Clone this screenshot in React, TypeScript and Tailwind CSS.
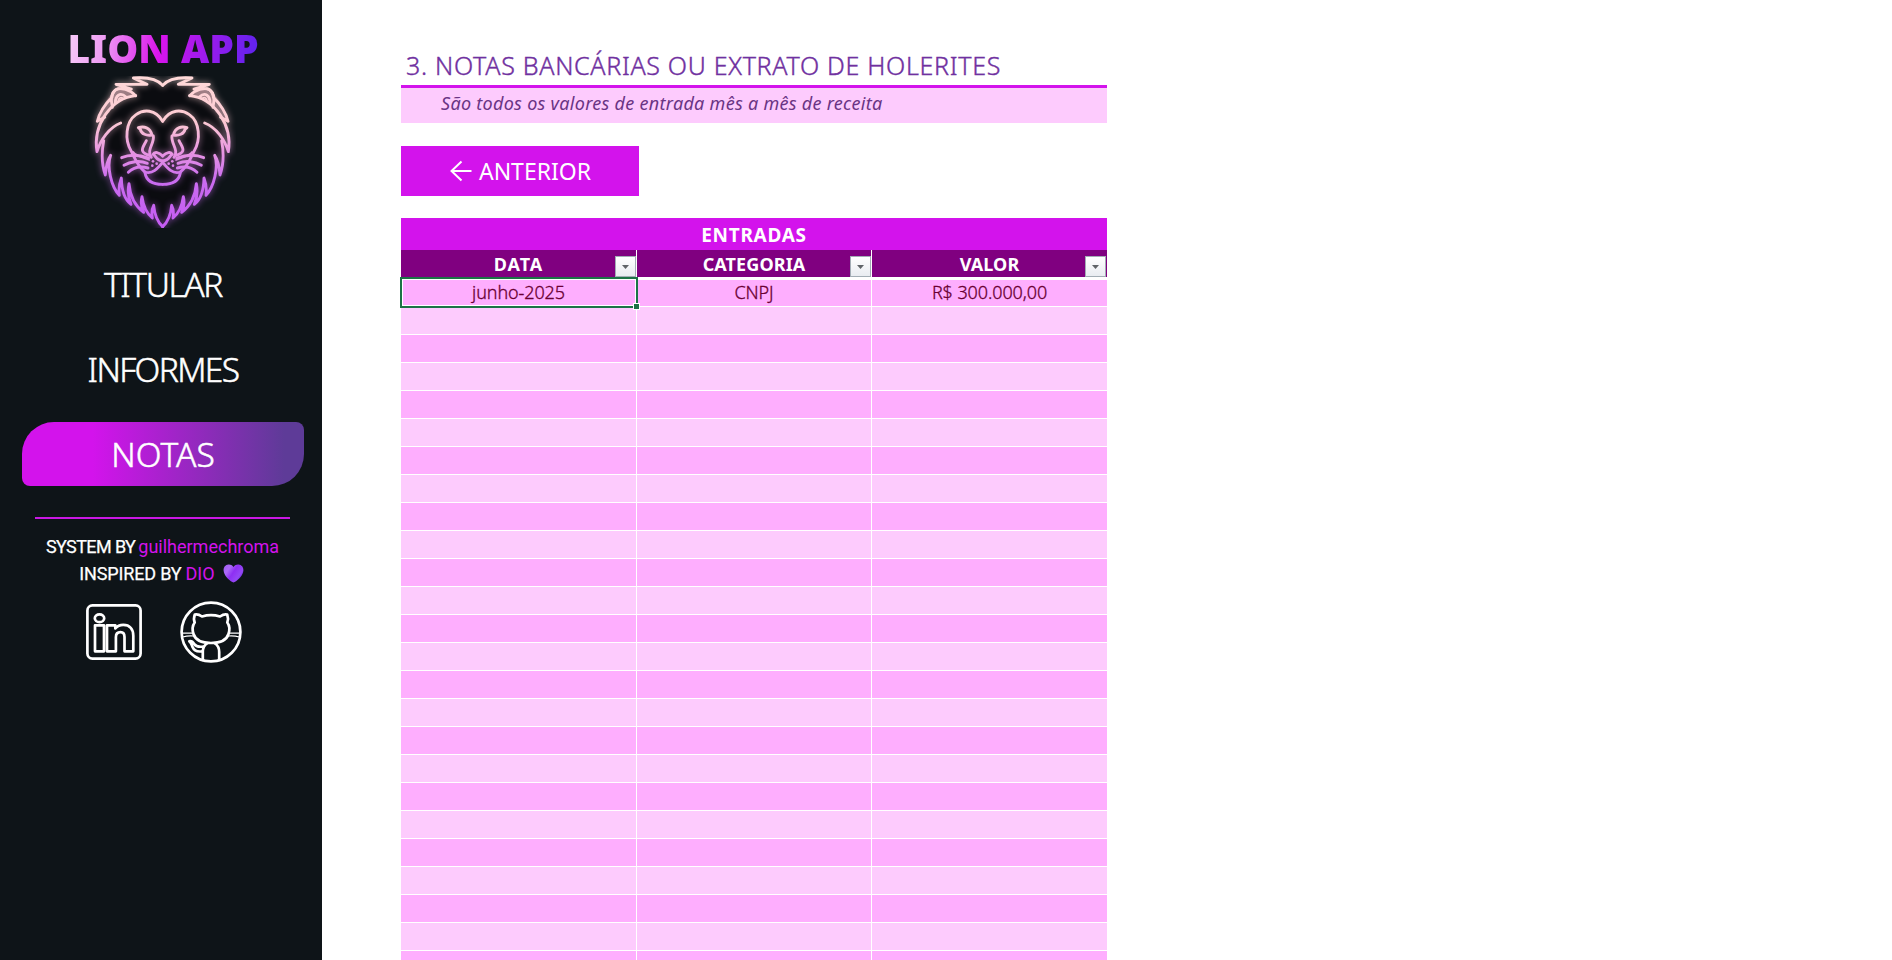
import type { ReactNode } from "react";

const navItems = [
  { label: "TITULAR", active: false, spacing: "tracking-[-1.4px]" },
  { label: "INFORMES", active: false, spacing: "tracking-[-1.6px]" },
  { label: "NOTAS", active: true, spacing: "tracking-[0.1px]" },
];

const columns = [
  { label: "DATA", spacing: "tracking-[1px]", filter: "mr-0" },
  { label: "CATEGORIA", spacing: "tracking-[0.1px]", filter: "mr-0" },
  { label: "VALOR", spacing: "tracking-[0.1px]", filter: "mr-px" },
];

const entries: string[][] = [["junho-2025", "CNPJ", "R$ 300.000,00"]];
const ROW_COUNT = 25;

function LionHalf() {
  return (
    <g>
      <path
        d="M184 262C178 240 184 208 200 206C222 204 240 216 257 227C232 232 205 246 184 262Z"
        fill="#f4b8c4"
        fillOpacity="0.35"
        stroke="none"
      />
      <path d="M184 222C166 242 148 276 142 304L180 276Z" fill="#f4b8c4" fillOpacity="0.28" stroke="none" />
      <path d="M338 196C325 181 300 170 250 174L291 193L198 193L244 207L208 206C194 205 186 222 186 232C166 252 148 280 142 304L164 292" />
      <path d="M257 227C236 206 212 202 198 209C184 218 182 240 187 262" />
      <path d="M257 227C224 230 190 250 166 284C142 320 135 360 141 395C152 358 178 322 212 309" />
      <path d="M196 248C196 228 210 214 228 231" />
      <path d="M205 244C205 234 213 230 219 236" strokeWidth="5" />
      <path d="M161 362C154 400 157 440 166 465C168 440 172 420 182 406C169 440 184 500 208 526C205 505 208 490 214 474C215 510 225 540 243 553C233 530 233 510 237 491C240 530 258 560 281 577C273 560 272 545 276 530C280 560 290 580 307 594C304 575 306 565 311 556C314 590 325 608 338 620" />
      <path d="M338 304C316 266 280 268 258 284C226 306 224 360 243 392C256 418 262 438 285 456C308 464 324 444 338 427" />
      <path d="M250 396C258 408 278 412 298 420" strokeWidth="5" />
      <path d="M285 458C289 483 308 493 338 493" />
      <path d="M310 348C314 370 288 390 304 412M289 362C280 382 262 396 302 408" />
      <path d="M338 408C326 396 314 394 309 403C318 406 316 421 338 423" />
      <path d="M265 323C282 318 300 322 306 345C290 348 274 342 271 328Z" />
      <path d="M215 413C240 402 270 405 296 414M222 436C240 425 268 420 292 430M235 457C250 442 272 438 294 444" />
      <g stroke="none" fill="url(#lionStroke)">
        <circle cx="309" cy="424" r="4" />
        <circle cx="307" cy="437" r="4" />
        <circle cx="320" cy="431" r="4" />
      </g>
    </g>
  );
}

function LionLogo() {
  const shape = (
    <>
      <LionHalf />
      <g transform="translate(676 0) scale(-1 1)">
        <LionHalf />
      </g>
    </>
  );
  return (
    <svg width="147" height="152" viewBox="117 168 441 456" className="block shrink-0 overflow-hidden">
      <defs>
        <linearGradient id="lionStroke" gradientUnits="userSpaceOnUse" x1="0" y1="168" x2="0" y2="624">
          <stop offset="0" stopColor="#ffd9d8" />
          <stop offset="0.3" stopColor="#fdcad3" />
          <stop offset="0.5" stopColor="#e895e2" />
          <stop offset="0.68" stopColor="#cb6cf0" />
          <stop offset="1" stopColor="#c45cf3" />
        </linearGradient>
        <filter id="lionGlow" filterUnits="userSpaceOnUse" x="90" y="130" width="500" height="520">
          <feGaussianBlur stdDeviation="10" />
        </filter>
      </defs>
      <path d="M338 196L250 180L190 230L142 390L190 500L338 616L486 500L534 390L486 230L426 180Z" fill="#0b0c10" />
      <g fill="none" strokeLinecap="round" strokeLinejoin="round" stroke="url(#lionStroke)">
        <g filter="url(#lionGlow)" opacity="0.5" strokeWidth="12">{shape}</g>
        <g strokeWidth="8.6">{shape}</g>
      </g>
    </svg>
  );
}

function HeartIcon() {
  return (
    <svg width="21" height="19" viewBox="0 0 21 19" className="ml-[4px] block">
      <defs>
        <linearGradient id="heart" x1="0" y1="0" x2="1" y2="0.6">
          <stop offset="0" stopColor="#a05cf5" />
          <stop offset="0.3" stopColor="#ac6af8" />
          <stop offset="0.55" stopColor="#8e2ff3" />
          <stop offset="0.85" stopColor="#9448f5" />
          <stop offset="1" stopColor="#6a2be0" />
        </linearGradient>
      </defs>
      <path
        d="M10.5 3C12 .8 14 .3 15.6 .5C18.6 .8 20.6 3.2 20.4 6.4C20.1 11.3 15.5 15.6 11.6 18.1Q10.5 18.7 9.4 18.1C5.5 15.6 .9 11.3 .6 6.4C.4 3.2 2.4 .8 5.4 .5C7 .3 9 .8 10.5 3Z"
        fill="url(#heart)"
      />
    </svg>
  );
}

function LinkedInIcon() {
  return (
    <svg width="56" height="56" viewBox="0 0 56 56" fill="none" stroke="#fff" strokeWidth="2.7" strokeLinejoin="round">
      <rect x="1.4" y="1.4" width="53.2" height="53.2" rx="5" />
      <ellipse cx="13.5" cy="14.2" rx="4.7" ry="3.9" />
      <path d="M9 21.3h9v26H9zM21 21.3h8.3v3.2c2-2.5 4.7-3.7 8-3.7c6.5 0 10 4.3 10 11v15.5h-8.8V33c0-3-1.3-4.8-4-4.8c-2.9 0-4.6 1.9-4.6 5v14.1H21z" />
    </svg>
  );
}

function GitHubIcon() {
  return (
    <svg width="62" height="62" viewBox="0 0 62 62" fill="none" stroke="#fff" strokeWidth="2.7" strokeLinejoin="round" strokeLinecap="round">
      <circle cx="31" cy="31" r="29.4" />
      <path d="M22 15.5C28 13.7 34 13.7 40 15.5C42.5 13.7 45 13 47.2 13.5C48.2 16.3 48.3 19 47.3 21.5C49.5 24.5 49.8 29 48.5 33C46.5 39.5 40 42 31 42S15.5 39.5 13.5 33C12.2 29 12.5 24.5 14.7 21.5C13.7 19 13.8 16.3 14.8 13.5C17 13 19.5 13.7 22 15.5Z" />
      <path d="M27 42.5C24 44.5 22.8 47.5 22.8 51V59M35 42.5C38 44.5 39.2 47.5 39.2 51V59" />
      <path d="M23.5 45.5C18 46.3 15.8 45.5 14.2 43C12.8 40.8 11.4 39.8 9.3 40.3C11.3 41.5 11.5 43.5 12.5 46C14 49.7 17.5 51 22.2 50.3" />
      <path d="M2 32.2H13M2.5 36Q8 34.5 13.5 35M60 32.2H49M59.5 36Q54 34.5 48.5 35" strokeWidth="1.2" />
    </svg>
  );
}

function FilterButton({ className }: { className: string }) {
  return (
    <span
      className={`absolute right-0 bottom-0 flex size-[21px] items-center justify-center border border-[#a3adb5] bg-linear-to-b from-white to-[#e9ecf1] ${className}`}
    >
      <svg width="7" height="4" viewBox="0 0 7 4" className="block">
        <path d="M0 0h7L3.5 4z" fill="#606468" />
      </svg>
    </span>
  );
}

function SelectionFrame() {
  return (
    <span className="pointer-events-none absolute -top-[3px] -right-[2px] -bottom-[2px] -left-px z-10 border-2 border-[#1c7346]">
      <span className="absolute inset-0 border border-white" />
      <span className="absolute -right-[4px] -bottom-[4px] size-[7px] border border-white bg-[#1c7346]" />
    </span>
  );
}

function Row({ children }: { children: ReactNode }) {
  return <div className="grid shrink-0 grid-cols-[235px_234px_235px] gap-px">{children}</div>;
}

export default function App() {
  return (
    <div className="flex h-[960px] w-[1892px] overflow-hidden bg-white font-['Noto_Sans',sans-serif]">
      <aside className="flex w-[322px] shrink-0 flex-col items-center bg-[#0e1418] pt-6 pl-[3px]">
        <h1 className="ml-px bg-[linear-gradient(100deg,#f7d0f7_0%,#ee9cf3_20%,#d814ec_48%,#b318ec_62%,#5a24ee_100%)] bg-clip-text text-[39px] leading-[48px] font-black text-transparent">
          LION APP
        </h1>
        <div className="mt-1 flex">
          <LionLogo />
        </div>
        <nav className="mt-6 ml-px flex w-[282px] flex-col gap-[21px]">
          {navItems.map((item) => (
            <a
              key={item.label}
              className={`block h-16 text-center text-[33.5px] leading-[64px] font-light text-white [-webkit-text-stroke:0.5px_white] ${item.spacing} ${
                item.active
                  ? "rounded-tl-[32px] rounded-tr-lg rounded-br-[32px] rounded-bl-lg bg-[linear-gradient(90deg,#d313ec_0%,#d313ec_25%,#5e3b98_93%)]"
                  : ""
              }`}
            >
              {item.label}
            </a>
          ))}
        </nav>
        <div className="mt-[31px] h-0.5 w-[255px] bg-[#c918e4]" />
        <footer className="mt-[14px] flex flex-col items-center font-['Roboto',sans-serif] text-[18px] leading-[27px] text-white">
          <p className="flex gap-[3px]">
            <span className="tracking-[-0.6px] [-webkit-text-stroke:0.25px_white]">SYSTEM BY</span>
            <span className="text-[#d313ec]">guilhermechroma</span>
          </p>
          <p className="-ml-0.5 flex items-center gap-1">
            <span className="tracking-[-0.15px] [-webkit-text-stroke:0.25px_white]">INSPIRED BY</span>
            <span className="text-[#d313ec]">DIO</span>
            <HeartIcon />
          </p>
        </footer>
        <div className="mt-[14px] ml-[3px] flex items-center gap-[38px]">
          <LinkedInIcon />
          <GitHubIcon />
        </div>
      </aside>

      <main className="ml-[79px] flex w-[706px] flex-col pt-[45px]">
        <h2 className="h-10 shrink-0 pl-[5px] text-[25px] leading-10 font-light tracking-[0.7px] whitespace-nowrap text-[#7030a0] [-webkit-text-stroke:0.4px_#7030a0]">
          3. NOTAS BANCÁRIAS OU EXTRATO DE HOLERITES
        </h2>
        <p className="h-[38px] shrink-0 border-t-3 border-[#d313ec] bg-[#fdcbfd] pl-10 text-[18px] leading-[30px] tracking-[0.29px] text-[#6a3484] italic">
          São todos os valores de entrada mês a mês de receita
        </p>
        <button className="mt-[23px] flex h-[50px] w-[238px] shrink-0 items-center justify-center gap-[7px] bg-[#d313ec] pl-px text-[23px] leading-[50px] text-white">
          <svg width="22" height="22" viewBox="0 0 22 22" fill="none" stroke="#fff" strokeWidth="2">
            <path d="M11.5 1.5L1.5 11L11.5 20.5M1.5 11H21.5" />
          </svg>
          ANTERIOR
        </button>

        <section className="mt-[22px] flex shrink-0 flex-col">
          <div className="h-8 shrink-0 bg-[#d313ec] pt-px text-center text-[19px] leading-8 font-bold tracking-[0.7px] text-white">
            ENTRADAS
          </div>
          <Row>
            {columns.map((column) => (
              <div
                key={column.label}
                className={`relative h-[27px] bg-[#800080] text-center text-[18px] leading-7 font-bold text-white ${column.spacing}`}
              >
                {column.label}
                <FilterButton className={column.filter} />
              </div>
            ))}
          </Row>
          <div className="mt-[3px] flex flex-col gap-px">
            {Array.from({ length: ROW_COUNT }, (_, row) => (
              <Row key={row}>
                {columns.map((column, col) => (
                  <div
                    key={column.label}
                    className={`relative text-center text-[18px] leading-6 font-light tracking-[-0.1px] text-[#6a0032] [-webkit-text-stroke:0.3px_#6a0032] ${
                      row === 0 ? "h-[26px]" : "h-[27px]"
                    } ${row % 2 === 0 ? "bg-[#feaefe]" : "bg-[#fdcbfd]"}`}
                  >
                    {entries[row]?.[col]}
                    {row === 0 && col === 0 && <SelectionFrame />}
                  </div>
                ))}
              </Row>
            ))}
          </div>
        </section>
      </main>
    </div>
  );
}
